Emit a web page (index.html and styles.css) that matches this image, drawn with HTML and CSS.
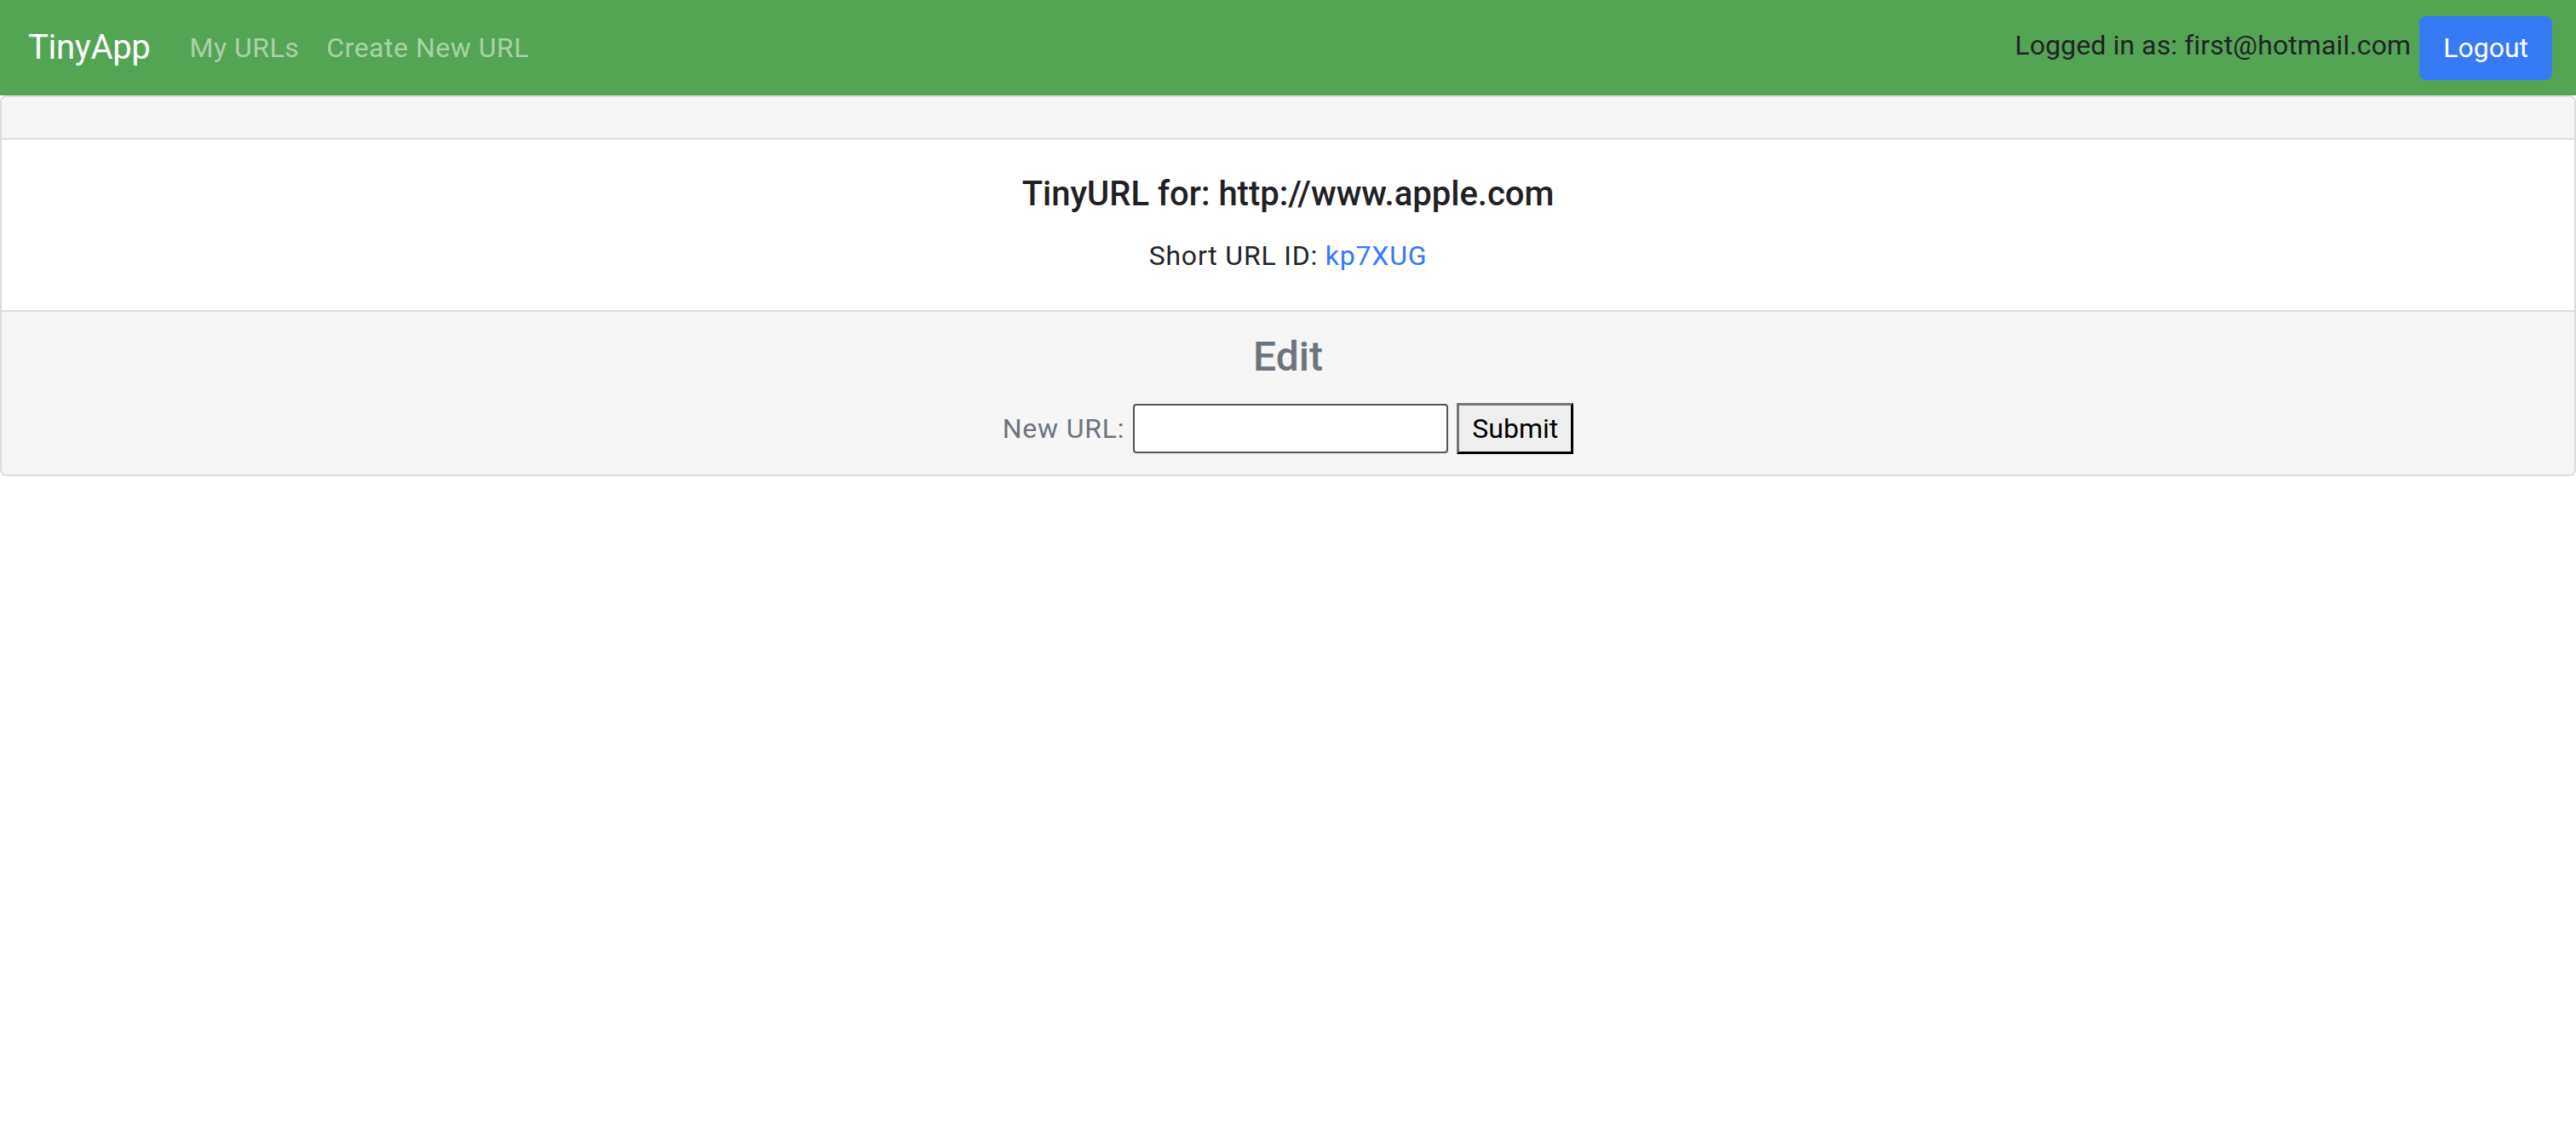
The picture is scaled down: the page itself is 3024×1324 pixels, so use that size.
FILE: index.html
```html
<!DOCTYPE html>
<html lang="en">
<head>
<meta charset="utf-8">
<title>TinyApp</title>
<link rel="stylesheet" href="styles.css">
</head>
<body>
<nav class="navbar">
  <a class="brand" href="#">TinyApp</a>
  <ul class="nav-links">
    <li><a class="nav-link" href="#">My URLs</a></li>
    <li><a class="nav-link" href="#">Create New URL</a></li>
  </ul>
  <div class="user">
    <span class="user-text">Logged in as: first@hotmail.com</span>
    <button class="btn-logout" type="button">Logout</button>
  </div>
</nav>
<main class="card">
  <div class="card-header"></div>
  <div class="card-body">
    <h5 class="card-title">TinyURL for: http://www.apple.com</h5>
    <p class="card-text">Short URL ID: <a class="short-link" href="#">kp7XUG</a></p>
  </div>
  <div class="card-footer">
    <h4 class="edit-title">Edit</h4>
    <form class="edit-form">
      <label class="edit-label" for="newurl">New URL:</label>
      <input class="edit-input" id="newurl" type="text">
      <button class="edit-submit" type="submit">Submit</button>
    </form>
  </div>
</main>
</body>
</html>
```

FILE: styles.css
```css
* { box-sizing: border-box; }

body {
  margin: 0;
  font-family: Roboto, Inter, "Noto Sans", "Liberation Sans", sans-serif;
  font-size: 32px;
  line-height: 1.5;
  color: #212529;
  background: #ffffff;
}

.navbar {
  display: flex;
  align-items: center;
  height: 112px;
  padding: 0 28px 0 33px;
  background: #53a553;
}

.brand {
  font-size: 40px;
  line-height: 60px;
  color: #ffffff;
  text-decoration: none;
  margin-right: 30px;
  letter-spacing: -0.3px;
}

.nav-links {
  display: flex;
  list-style: none;
  margin: 0;
  padding: 0;
}

.nav-link {
  display: block;
  padding: 0 16px;
  color: rgba(255, 255, 255, 0.5);
  text-decoration: none;
  font-size: 32px;
  letter-spacing: 0.5px;
}

.user {
  margin-left: auto;
  display: flex;
  align-items: center;
}

.user-text {
  color: #212325;
  margin-bottom: 6px;
  letter-spacing: 0.1px;
}

.btn-logout {
  margin-left: 10px;
  height: 75px;
  padding: 0 26px;
  font-family: inherit;
  font-size: 32px;
  color: #ffffff;
  background: #367af6;
  border: 2px solid #367af6;
  border-radius: 8px;
}

.card {
  display: block;
  border: 2px solid #dcdcdc;
  border-radius: 8px;
  overflow: hidden;
  text-align: center;
}

.card-header {
  height: 50px;
  background: #f6f6f6;
  border-bottom: 2px solid #dcdcdc;
}

.card-body {
  padding: 40px;
  background: #ffffff;
}

.card-title {
  margin: 0 0 24px;
  font-size: 40px;
  line-height: 48px;
  font-weight: 500;
  color: #1f2124;
}

.card-text {
  margin: 0;
  font-size: 32px;
  line-height: 48px;
  letter-spacing: 0.8px;
}

.short-link {
  color: #3479f6;
  text-decoration: none;
}

.card-footer {
  padding: 24px 40px;
  background: #f6f6f6;
  border-top: 2px solid #dcdcdc;
  color: #6c757d;
}

.edit-title {
  margin: 0 0 16px;
  font-size: 48px;
  line-height: 57.6px;
  font-weight: 500;
  color: #6c747d;
}

.edit-form {
  display: flex;
  justify-content: center;
  align-items: center;
  gap: 10px;
  padding-top: 9px;
}

.edit-label {
  font-size: 32px;
  line-height: 48px;
  color: #6c747d;
  letter-spacing: 0.8px;
}

.edit-input {
  width: 370px;
  height: 58px;
  font-family: inherit;
  font-size: 32px;
  background: #ffffff;
  border: 2px solid #555555;
  border-radius: 4px;
  padding: 0 4px;
}

.edit-submit {
  height: 60px;
  padding: 0 15px;
  font-family: inherit;
  font-size: 32px;
  color: #000000;
  background: #efefef;
  border: 3px outset #767676;
  border-color: #767676 #222222 #222222 #767676;
  border-radius: 0;
}
```
